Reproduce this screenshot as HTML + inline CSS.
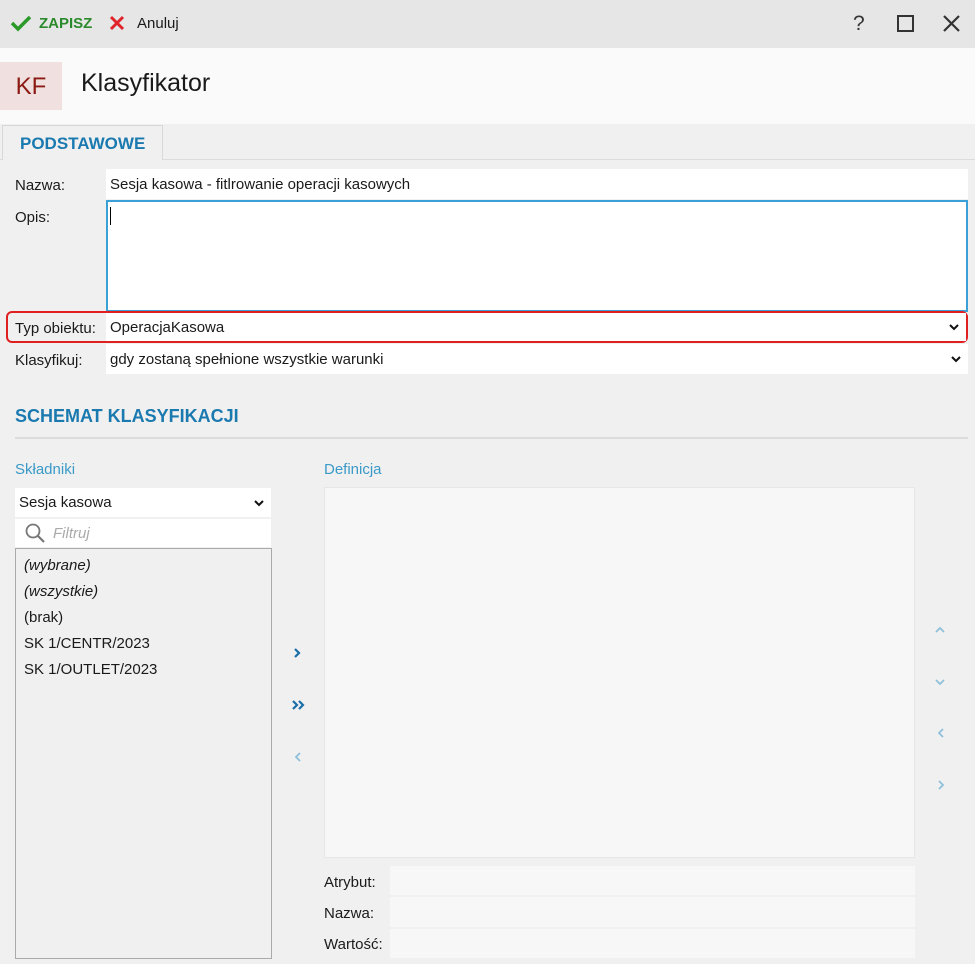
<!DOCTYPE html>
<html><head><meta charset="utf-8"><style>
*{box-sizing:border-box;margin:0;padding:0}
body{width:975px;height:964px;overflow:hidden;background:#f0f0f0;font-family:"Liberation Sans",sans-serif;font-size:15px;color:#1a1a1a;position:relative}
.a{position:absolute}
.inp{position:absolute;background:#fff;height:30px;line-height:31px;padding-left:4px;font-size:15px}
.lbl{position:absolute;font-size:15px}
.chev{position:absolute;right:6px;top:10px}
.blue{color:#1a7ab0}
</style></head><body>
<div class="a" style="left:0;top:0;width:975px;height:48px;background:#e6e6e6"></div>
<svg class="a" style="left:10px;top:14px" width="22" height="18" viewBox="0 0 22 18"><path d="M2 9 L8 15 L20 3" stroke="#2b9a2b" stroke-width="3.5" fill="none"/></svg>
<div class="a" style="left:39px;top:15px;color:#2b8a2b;font-weight:bold;font-size:15px">ZAPISZ</div>
<svg class="a" style="left:109px;top:15px" width="16" height="16"><path d="M2 2 L14 14 M14 2 L2 14" stroke="#e0242c" stroke-width="3"/></svg>
<div class="a" style="left:137px;top:15px">Anuluj</div>
<div class="a" style="left:853px;top:12px;font-size:21px;color:#333">?</div>
<div class="a" style="left:897px;top:15px;width:17px;height:17px;border:2px solid #333"></div>
<svg class="a" style="left:942px;top:14px" width="19" height="19"><path d="M2 2 L17 17 M17 2 L2 17" stroke="#333" stroke-width="2.2"/></svg>
<div class="a" style="left:0;top:48px;width:975px;height:76px;background:#fafafa"></div>
<div class="a" style="left:0;top:62px;width:62px;height:48px;background:#f0e0df;color:#8b1a12;font-size:24px;line-height:50px;text-align:center">KF</div>
<div class="a" style="left:81px;top:69px;font-size:25px">Klasyfikator</div>
<div class="a" style="left:0;top:159px;width:975px;height:1px;background:#dcdcdc"></div>
<div class="a" style="left:2px;top:125px;width:161px;height:35px;background:#f0f0f0;border:1px solid #d8d8d8;border-bottom:none"></div>
<div class="a blue" style="left:20px;top:134px;font-weight:bold;font-size:17px">PODSTAWOWE</div>
<div class="lbl" style="left:15px;top:177px">Nazwa:</div>
<div class="inp" style="left:106px;top:169px;width:862px">Sesja kasowa - fitlrowanie operacji kasowych</div>
<div class="lbl" style="left:15px;top:209px">Opis:</div>
<div class="a" style="left:106px;top:200px;width:862px;height:112px;background:#fff;border:2px solid #3aa0d6"></div>
<div class="a" style="left:110px;top:207px;width:1px;height:18px;background:#000"></div>
<div class="a" style="left:6px;top:311px;width:962px;height:32px;border:2px solid #e02020;border-radius:6px"></div>
<div class="lbl" style="left:15px;top:320px">Typ obiektu:</div>
<div class="inp" style="left:106px;top:313px;width:860px;height:28px;line-height:29px">OperacjaKasowa<svg class="chev" width="12" height="8" style="top:10px"><path d="M2 2 L6 6 L10 2" stroke="#111" stroke-width="2" fill="none"/></svg></div>
<div class="lbl" style="left:15px;top:352px">Klasyfikuj:</div>
<div class="inp" style="left:106px;top:344px;width:862px">gdy zostaną spełnione wszystkie warunki<svg class="chev" width="12" height="8" style="top:11px"><path d="M2 2 L6 6 L10 2" stroke="#111" stroke-width="2" fill="none"/></svg></div>
<div class="a blue" style="left:15px;top:406px;font-weight:bold;font-size:18px">SCHEMAT KLASYFIKACJI</div>
<div class="a" style="left:15px;top:437px;width:953px;height:2px;background:#dcdcdc"></div>
<div class="a" style="left:15px;top:461px;color:#3a9ac8">Składniki</div>
<div class="a" style="left:324px;top:461px;color:#3a9ac8">Definicja</div>
<div class="inp" style="left:15px;top:488px;width:256px;height:29px;line-height:30px">Sesja kasowa<svg class="chev" width="12" height="8" style="top:11px"><path d="M2 2 L6 6 L10 2" stroke="#111" stroke-width="2" fill="none"/></svg></div>
<div class="inp" style="left:15px;top:519px;width:256px;height:28px"></div>
<svg class="a" style="left:24px;top:522px" width="22" height="22"><circle cx="9" cy="9" r="6.5" stroke="#777" stroke-width="1.8" fill="none"/><path d="M14 14 L20 20" stroke="#777" stroke-width="2.2"/></svg>
<div class="a" style="left:53px;top:525px;font-style:italic;color:#aaa">Filtruj</div>
<div class="a" style="left:15px;top:548px;width:257px;height:411px;background:#f0f0f0;border:1px solid #aaa"></div>
<div class="a" style="left:24px;top:553px;line-height:26px"><i>(wybrane)</i><br><i>(wszystkie)</i><br>(brak)<br>SK 1/CENTR/2023<br>SK 1/OUTLET/2023</div>
<div class="a" style="left:324px;top:487px;width:591px;height:371px;background:#f7f7f7;border:1px solid #e6e6e6"></div>
<svg class="a" style="left:292px;top:647px" width="10" height="12"><path d="M3 2 L7 6 L3 10" stroke="#1a6ea8" stroke-width="2.2" fill="none"/></svg>
<svg class="a" style="left:290px;top:699px" width="16" height="12"><path d="M3 2 L7 6 L3 10 M9 2 L13 6 L9 10" stroke="#1a6ea8" stroke-width="2.2" fill="none"/></svg>
<svg class="a" style="left:293px;top:751px" width="10" height="12"><path d="M7 2 L3 6 L7 10" stroke="#8ec0dc" stroke-width="1.8" fill="none"/></svg>
<svg class="a" style="left:934px;top:626px" width="12" height="8"><path d="M2 6 L6 2 L10 6" stroke="#8ec0dc" stroke-width="1.8" fill="none"/></svg>
<svg class="a" style="left:934px;top:678px" width="12" height="8"><path d="M2 2 L6 6 L10 2" stroke="#8ec0dc" stroke-width="1.8" fill="none"/></svg>
<svg class="a" style="left:936px;top:727px" width="10" height="12"><path d="M7 2 L3 6 L7 10" stroke="#8ec0dc" stroke-width="1.8" fill="none"/></svg>
<svg class="a" style="left:936px;top:779px" width="10" height="12"><path d="M3 2 L7 6 L3 10" stroke="#8ec0dc" stroke-width="1.8" fill="none"/></svg>
<div class="lbl" style="left:324px;top:874px">Atrybut:</div>
<div class="a" style="left:390px;top:866px;width:525px;height:29px;background:#f7f7f7"></div>
<div class="lbl" style="left:324px;top:905px">Nazwa:</div>
<div class="a" style="left:390px;top:897px;width:525px;height:30px;background:#f7f7f7"></div>
<div class="lbl" style="left:324px;top:936px">Wartość:</div>
<div class="a" style="left:390px;top:929px;width:525px;height:29px;background:#f7f7f7"></div>
</body></html>
